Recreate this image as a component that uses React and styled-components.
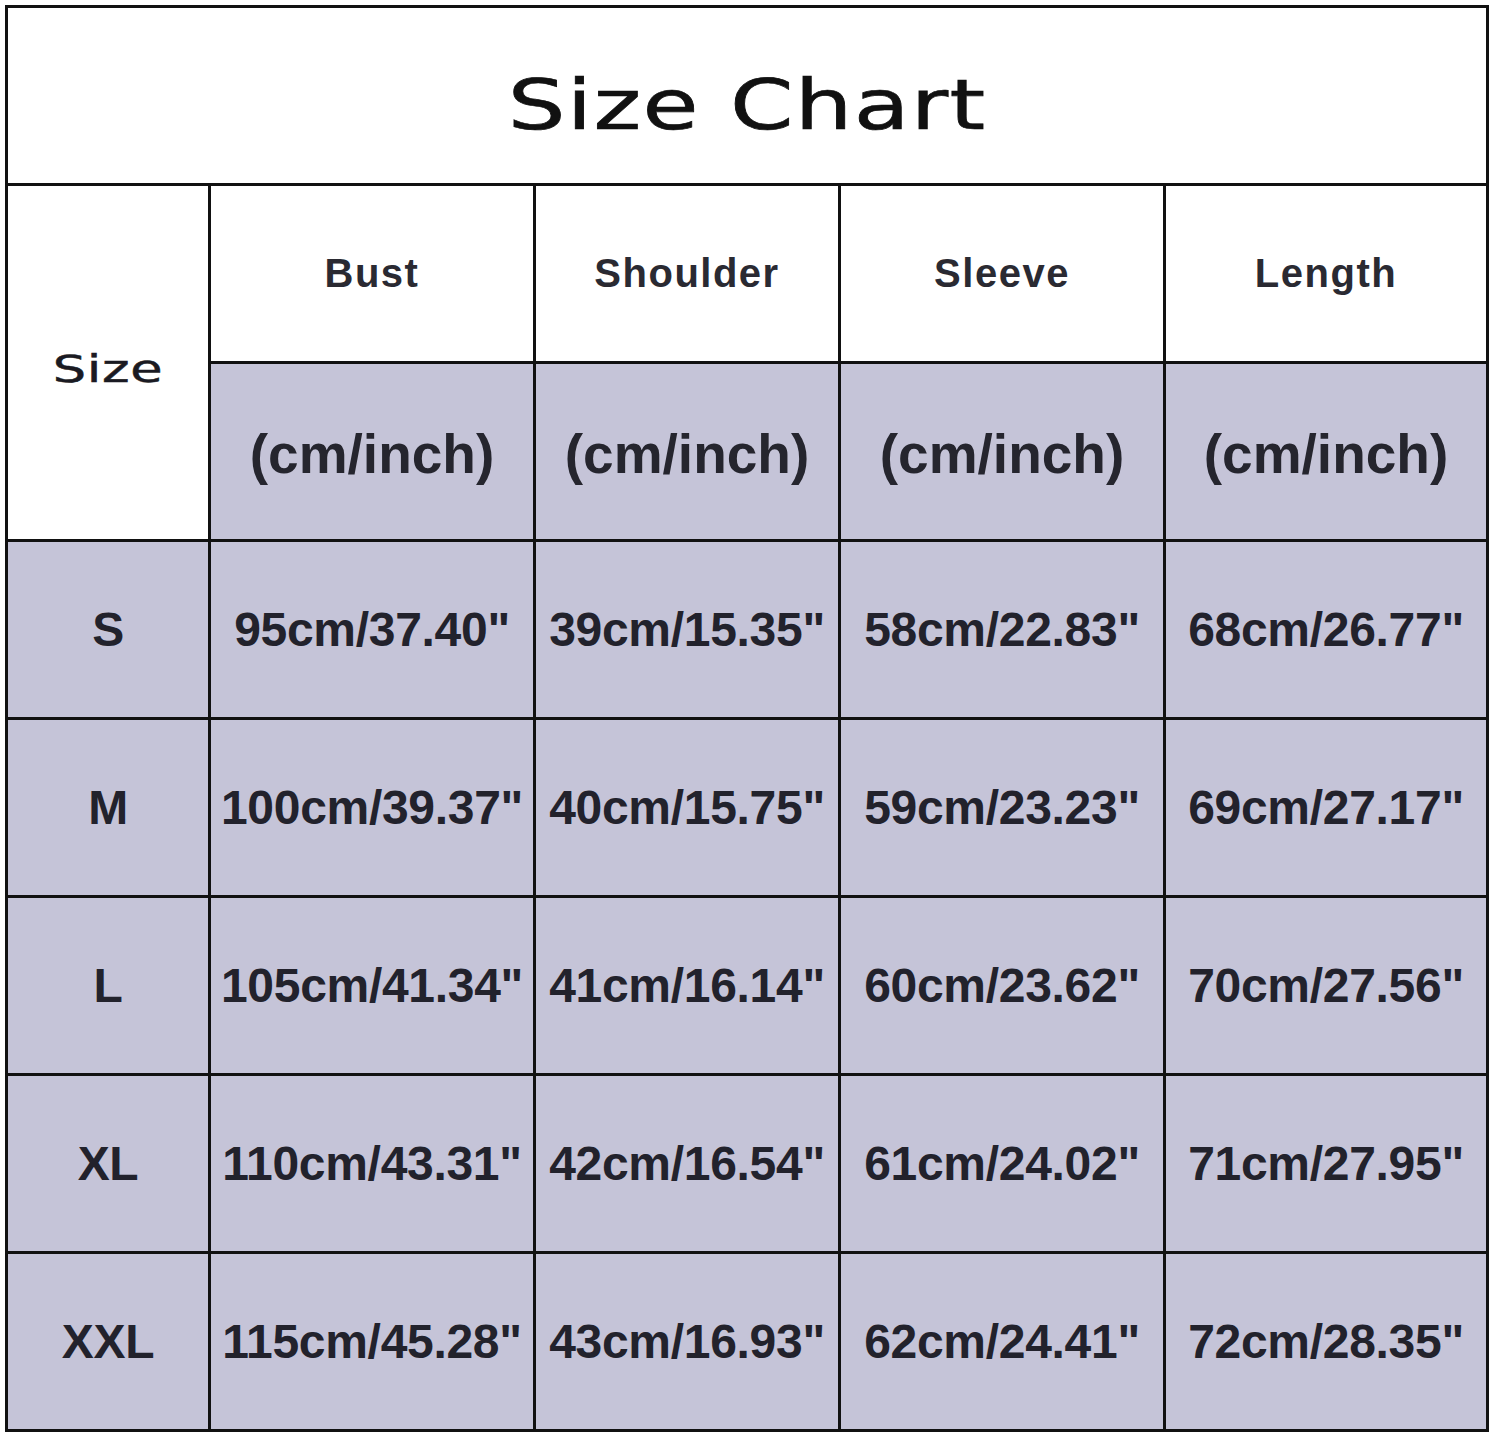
import React from 'react';
import styled, { createGlobalStyle } from 'styled-components';

const GlobalStyle = createGlobalStyle`
  html, body {
    margin: 0;
    padding: 0;
    background: #ffffff;
  }
  body {
    font-family: "Liberation Sans", Arial, sans-serif;
  }
`;

const columns = [
  { key: 'bust', label: 'Bust' },
  { key: 'shoulder', label: 'Shoulder' },
  { key: 'sleeve', label: 'Sleeve' },
  { key: 'length', label: 'Length' },
];

const rows = [
  { size: 'S', bust: '95cm/37.40"', shoulder: '39cm/15.35"', sleeve: '58cm/22.83"', length: '68cm/26.77"' },
  { size: 'M', bust: '100cm/39.37"', shoulder: '40cm/15.75"', sleeve: '59cm/23.23"', length: '69cm/27.17"' },
  { size: 'L', bust: '105cm/41.34"', shoulder: '41cm/16.14"', sleeve: '60cm/23.62"', length: '70cm/27.56"' },
  { size: 'XL', bust: '110cm/43.31"', shoulder: '42cm/16.54"', sleeve: '61cm/24.02"', length: '71cm/27.95"' },
  { size: 'XXL', bust: '115cm/45.28"', shoulder: '43cm/16.93"', sleeve: '62cm/24.41"', length: '72cm/28.35"' },
];

const App = () => {
  return (
    <>
      <GlobalStyle />
      <Page>
        <Chart>
          <TitleCell>
            <Title>Size Chart</Title>
          </TitleCell>

          <SizeHead>
            <SizeWord>Size</SizeWord>
          </SizeHead>
          {columns.map((col) => (
            <HeadCell key={col.key}>{col.label}</HeadCell>
          ))}
          {columns.map((col) => (
            <UnitCell key={col.key + '-unit'}>(cm/inch)</UnitCell>
          ))}

          {rows.map((row) => (
            <React.Fragment key={row.size}>
              <DataCell>{row.size}</DataCell>
              {columns.map((col) => (
                <DataCell key={col.key}>{row[col.key]}</DataCell>
              ))}
            </React.Fragment>
          ))}
        </Chart>
      </Page>
    </>
  );
};

export default App;

const Page = styled.div`
  padding: 5px 0 0 5px;
  width: 1494px;
  box-sizing: border-box;
`;

// the black background showing through the gaps draws the table rules
const Chart = styled.div`
  display: grid;
  grid-template-columns: 200px 322px 302px 322px 320px;
  grid-template-rows: repeat(8, 175px);
  gap: 3px;
  padding: 3px;
  width: 1484px;
  box-sizing: border-box;
  background: #111111;
`;

const Cell = styled.div`
  display: flex;
  align-items: center;
  justify-content: center;
  background: ${(props) => props.bg || '#ffffff'};
  color: #22222c;
  white-space: nowrap;
  overflow: hidden;
`;

const TitleCell = styled(Cell)`
  grid-column: 1 / span 5;
  padding-top: 18px;
  box-sizing: border-box;
`;

const Title = styled.span`
  display: inline-block;
  font-family: "DejaVu Sans", Verdana, sans-serif;
  font-size: 70px;
  letter-spacing: 1px;
  color: #111111;
  -webkit-text-stroke: 0.7px #111111;
  transform: scaleX(1.3);
`;

const SizeHead = styled(Cell)`
  grid-row: 2 / span 2;
  padding-top: 14px;
  box-sizing: border-box;
`;

const SizeWord = styled.span`
  display: inline-block;
  font-family: "DejaVu Sans", Verdana, sans-serif;
  font-size: 37px;
  letter-spacing: 0.5px;
  color: #1a1a22;
  -webkit-text-stroke: 0.5px #1a1a22;
  transform: scaleX(1.42);
`;

const HeadCell = styled(Cell)`
  font-size: 40px;
  font-weight: bold;
  letter-spacing: 1.5px;
  color: #2a2a32;
`;

const UnitCell = styled(Cell).attrs({ bg: '#c5c4d8' })`
  font-size: 55px;
  font-weight: bold;
  color: #25252e;
  padding-top: 4px;
  box-sizing: border-box;
`;

const DataCell = styled(Cell).attrs({ bg: '#c5c4d8' })`
  font-size: 48px;
  font-weight: bold;
  letter-spacing: -0.3px;
  color: #22222c;
`;
